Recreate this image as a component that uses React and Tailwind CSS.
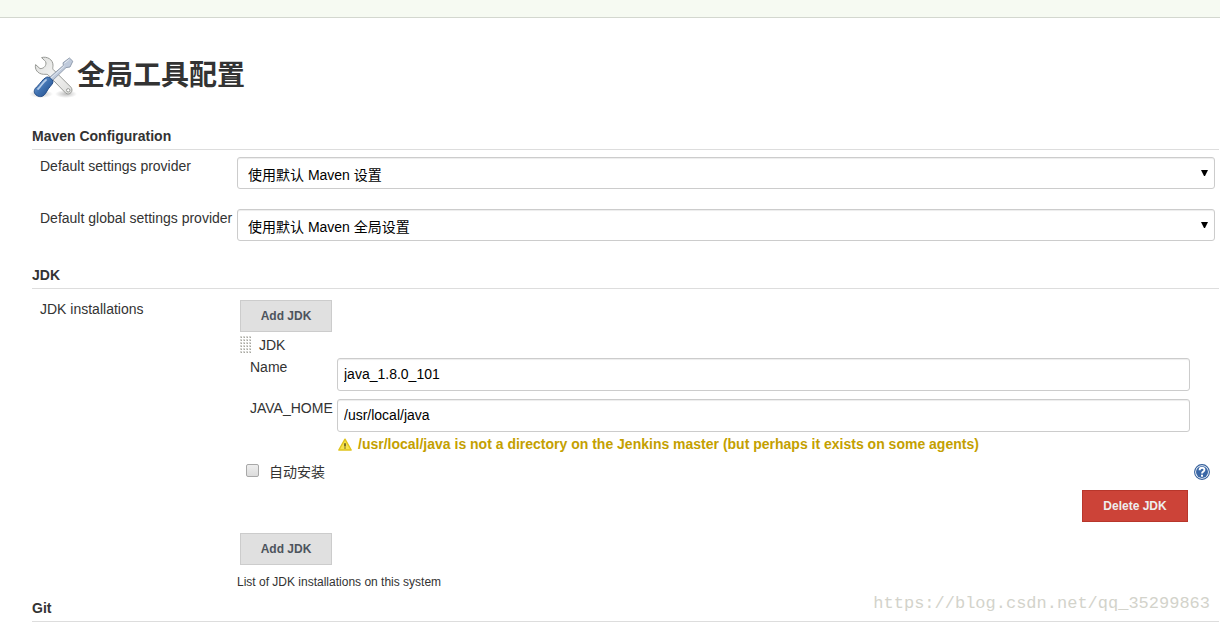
import { useState } from 'react';

function ToolsIcon() {
  return (
    <svg className="size-12 shrink-0" viewBox="0 0 48 48" aria-hidden="true">
      <defs>
        <linearGradient id="steel" x1="0" y1="0" x2="1" y2="1">
          <stop offset="0" stopColor="#dcdddb" />
          <stop offset="0.5" stopColor="#f3f3f2" />
          <stop offset="1" stopColor="#dcdddb" />
        </linearGradient>
        <linearGradient id="handle" x1="0" y1="0" x2="1" y2="1">
          <stop offset="0.1" stopColor="#7ba3d4" />
          <stop offset="0.5" stopColor="#3f71b0" />
          <stop offset="1" stopColor="#204a87" />
        </linearGradient>
        <radialGradient id="shade">
          <stop offset="0" stopColor="#000" stopOpacity="0.25" />
          <stop offset="1" stopColor="#000" stopOpacity="0" />
        </radialGradient>
      </defs>
      <ellipse cx="12" cy="42" rx="12" ry="4" fill="url(#shade)" />
      <ellipse cx="37" cy="42" rx="11" ry="4" fill="url(#shade)" />
      <path
        d="M12.6 5.6 C18 4 24 7.5 24 13.2 C24 15.3 23.4 16.2 24 17.3 L42 35.3 C45 39 40.5 44 36.8 41.2 L19 22.8 C18 22 16.5 22.4 14.5 22.3 C8.5 22 5.4 17 6.6 12.6 L11 16.6 C14 16.8 17 14.6 17 11 C16.8 8.6 14.4 8 12.6 5.6 Z"
        fill="url(#steel)"
        stroke="#989a96"
        strokeWidth="1"
        strokeLinejoin="round"
      />
      <circle cx="39.2" cy="38.3" r="1.7" fill="#fff" stroke="#989a96" />
      <path
        d="M18.4 27.4 L34.4 13.4 L34 10.8 L40.4 6 L43.8 9.2 L41 15 L37 15.6 L21.6 30.4 Z"
        fill="#bfcadb"
        stroke="#939eaf"
        strokeWidth="1"
        strokeLinejoin="round"
      />
      <path d="M35.4 11.4 L40.2 7.4 M20 27.8 L35.4 14" stroke="#e4eaf2" strokeWidth="1" />
      <path
        d="M17.6 25.2 C19.5 24.2 24.2 27.5 24 30 C23.8 32.5 19.5 35.5 17.4 40 C15 44.8 11 45.6 8 43.6 C4.5 41.5 4.4 38 7.4 35.2 C11.5 32 13.2 27 17.6 25.2 Z"
        fill="url(#handle)"
        stroke="#204a87"
      />
      <path d="M17 28 C13.5 30.5 12.5 34 9 37" fill="none" stroke="#b5cdea" strokeWidth="1.8" strokeLinecap="round" />
    </svg>
  );
}

function WarningIcon() {
  return (
    <svg className="size-4 shrink-0" viewBox="0 0 16 16" aria-hidden="true">
      <path d="M8 3.2 L14.2 14 H1.8 Z" fill="#f7e34c" stroke="#e0c41c" strokeWidth="1.4" strokeLinejoin="round" />
      <path d="M8 7.2 V10.4 M8 11.4 V12.6" stroke="#5c5424" strokeWidth="1.6" />
    </svg>
  );
}

function HelpIcon() {
  return (
    <svg className="size-4" viewBox="0 0 16 16" aria-hidden="true">
      <circle cx="8" cy="8" r="7.4" fill="#fff" stroke="#35609c" strokeWidth="1.1" />
      <circle cx="8" cy="8" r="6" fill="#3a67a6" />
      <path d="M5.6 6.2 C5.6 2.8 10.6 3 10.4 6 C10.3 7.6 8 7.6 8 9.6" fill="none" stroke="#fff" strokeWidth="1.9" />
      <rect x="7" y="10.7" width="2" height="2" fill="#fff" />
    </svg>
  );
}

function DragHandle() {
  const cols = [0, 3, 6, 9];
  const rows = [0, 3, 6, 9, 12, 15];
  return (
    <svg className="w-3 h-[18px] cursor-move" viewBox="0 0 12 18" shapeRendering="crispEdges" aria-hidden="true">
      {rows.map((y) =>
        cols.map((x) => (
          <g key={`${x}-${y}`}>
            <rect x={x} y={y} width="2" height="2" fill="#d6d6d2" />
            <rect x={x + 1} y={y + 1} width="1" height="1" fill="#a6a6a0" />
          </g>
        ))
      )}
    </svg>
  );
}

function SectionTitle({ children }) {
  return (
    <h2 className="h-6 border-b border-[#ddd] text-sm leading-5 font-bold">{children}</h2>
  );
}

function SelectRow({ id, label, option }) {
  return (
    <div className="flex items-start pl-2">
      <label htmlFor={id} className="w-[197px] shrink-0 whitespace-nowrap leading-[18px]">{label}</label>
      <div className="relative mr-1 flex-1">
        <select
          id={id}
          className="block h-8 w-full appearance-none rounded-[3px] border border-[#ccc] bg-white px-2.5 pt-1 text-sm text-black shadow-[inset_0_1px_1px_rgba(0,0,0,0.075)]"
        >
          <option>{option}</option>
        </select>
        <svg className="pointer-events-none absolute top-3 right-[7px] h-2 w-[7px]" viewBox="0 0 7 8" aria-hidden="true">
          <path d="M0 1 H7 L4 7 H3 Z" fill="#000" />
        </svg>
      </div>
    </div>
  );
}

function TextRow({ id, label, value, onChange }) {
  return (
    <div className="flex items-start">
      <label htmlFor={id} className="w-[87px] shrink-0 leading-[18px]">{label}</label>
      <input
        id={id}
        type="text"
        value={value}
        onChange={(e) => onChange(e.target.value)}
        className="h-[33px] min-w-0 flex-1 rounded-[3px] border border-[#ccc] px-1.5 pb-0.5 text-sm text-black shadow-[inset_0_1px_1px_rgba(0,0,0,0.075)]"
      />
    </div>
  );
}

function AddButton() {
  return (
    <button type="button" className="ml-[3px] block h-8 min-w-[92px] border border-[#ccc] bg-[#e0e0e0] text-xs font-bold text-[#4d545d]">
      Add JDK
    </button>
  );
}

export default function App() {
  const [name, setName] = useState('java_1.8.0_101');
  const [home, setHome] = useState('/usr/local/java');
  const [autoInstall, setAutoInstall] = useState(false);

  return (
    <div className="relative bg-white font-['Liberation_Sans','Noto_Sans_CJK_SC',sans-serif] text-sm text-[#333]">
      <header className="h-[18px] border-b border-[#d3d7cf] bg-[#f6faf2]" />

      <main className="pt-[34px] pr-px pl-8">
        <div className="-ml-[3px] flex items-center">
          <ToolsIcon />
          <h1 className="text-[28px] leading-10 font-bold">全局工具配置</h1>
        </div>

        <form className="mt-[26px]" onSubmit={(e) => e.preventDefault()}>
          <SectionTitle>Maven Configuration</SectionTitle>
          <div className="mt-[7px] mb-6 flex flex-col gap-5">
            <SelectRow id="settings" label="Default settings provider" option="使用默认 Maven 设置" />
            <SelectRow id="global-settings" label="Default global settings provider" option="使用默认 Maven 全局设置" />
          </div>

          <SectionTitle>JDK</SectionTitle>
          <div className="mt-[11px] mb-[7px] flex items-start pl-2">
            <div className="w-[197px] shrink-0 leading-[18px]">JDK installations</div>
            <div className="flex-1">
              <AddButton />
              <div className="mt-1 ml-[3px] flex items-center gap-[7px] leading-[18px]">
                <DragHandle />
                <span>JDK</span>
              </div>

              <div className="mt-1 mr-[29px] ml-[13px] flex flex-col gap-2">
                <TextRow id="jdk-name" label="Name" value={name} onChange={setName} />
                <TextRow id="java-home" label="JAVA_HOME" value={home} onChange={setHome} />
              </div>
              <div className="mt-0.5 ml-[100px] flex items-center gap-[5px] leading-5 font-bold text-[#c4a000]">
                <WarningIcon />
                <span>/usr/local/java is not a directory on the Jenkins master (but perhaps it exists on some agents)</span>
              </div>

              <div className="mt-2 mr-[9px] ml-[9px] flex items-center leading-5">
                <input
                  id="auto-install"
                  type="checkbox"
                  checked={autoInstall}
                  onChange={(e) => setAutoInstall(e.target.checked)}
                  className="mr-2.5 mb-1 size-[13px] appearance-none rounded-xs border border-[#a8a8a8] bg-linear-to-b from-[#eee] to-[#dcdcdc] checked:bg-[#666]"
                />
                <label htmlFor="auto-install">自动安装</label>
                <button type="button" aria-label="Help" className="ml-auto">
                  <HelpIcon />
                </button>
              </div>

              <button type="button" className="mt-2 mr-[31px] ml-auto block h-8 min-w-[106px] border border-[#b8362b] bg-[#cc4338] text-xs font-bold text-[#eee]">
                Delete JDK
              </button>
              <div className="mt-[11px]">
                <AddButton />
              </div>
              <p className="mt-2 text-xs leading-[18px]">List of JDK installations on this system</p>
            </div>
          </div>

          <SectionTitle>Git</SectionTitle>
        </form>
      </main>

      <div className="pointer-events-none absolute right-2.5 bottom-2 font-['Liberation_Mono',monospace] text-[17px] leading-5 text-[#d3d3cb]">
        https://blog.csdn.net/qq_35299863
      </div>
    </div>
  );
}
